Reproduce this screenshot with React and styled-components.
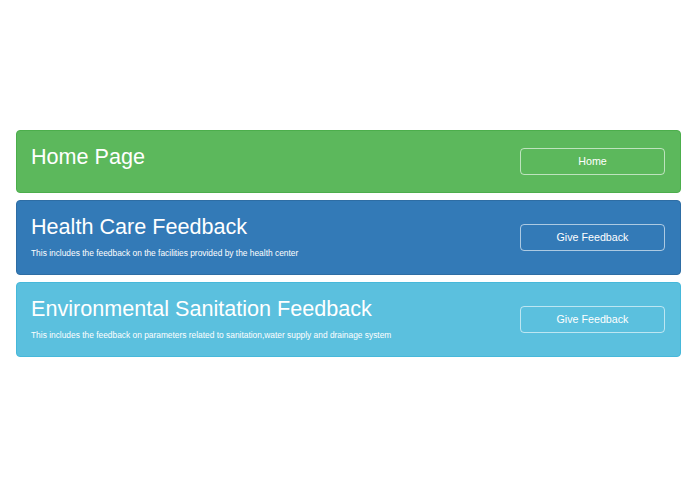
import React from 'react';
import styled, { createGlobalStyle } from 'styled-components';

const GlobalStyle = createGlobalStyle`
    body {
        margin: 0;
        background: #ffffff;
        font-family: "Liberation Sans", Arial, sans-serif;
    }
`;

const tones = {
    success: { bg: '#5cb85c', border: '#4cae4c' },
    primary: { bg: '#337ab7', border: '#2e6da4' },
    info: { bg: '#5bc0de', border: '#46b8da' },
};

const Page = styled.main`
    display: flex;
    flex-direction: column;
    gap: 7px;
    width: 665px;
    padding: 130px 0 0 16px;
`;

const Panel = styled.section`
    display: flex;
    align-items: center;
    justify-content: space-between;
    padding: 14px 15px 15px 14px;
    background: ${p => tones[p.$tone].bg};
    border: 1px solid ${p => tones[p.$tone].border};
    border-radius: 4px;
    color: #ffffff;
`;

const Body = styled.div`
    display: flex;
    flex-direction: column;
`;

const Title = styled.h2`
    margin: 0 0 8px;
    font-size: 21.6px;
    line-height: 24px;
    font-weight: 400;
`;

const Desc = styled.p`
    margin: 0;
    font-size: 8.4px;
    line-height: 12px;
`;

const OutlineButton = styled.a`
    display: flex;
    align-items: center;
    justify-content: center;
    box-sizing: border-box;
    width: 145px;
    height: 27px;
    border: 1px solid rgba(255, 255, 255, 0.6);
    border-radius: 4px;
    color: #ffffff;
    font-size: 10.7px;
    text-decoration: none;
    cursor: pointer;
`;

const sections = [
    { tone: 'success', title: 'Home Page', action: 'Home' },
    {
        tone: 'primary',
        title: 'Health Care Feedback',
        desc: 'This includes the feedback on the facilities provided by the health center',
        action: 'Give Feedback',
    },
    {
        tone: 'info',
        title: 'Environmental Sanitation Feedback',
        desc: 'This includes the feedback on parameters related to sanitation,water supply and drainage system',
        action: 'Give Feedback',
    },
];

const App = () => {
    return (
        <>
            <GlobalStyle />
            <Page>
                {sections.map(s => (
                    <Panel key={s.title} $tone={s.tone}>
                        <Body>
                            <Title>{s.title}</Title>
                            {s.desc && <Desc>{s.desc}</Desc>}
                        </Body>
                        <OutlineButton>{s.action}</OutlineButton>
                    </Panel>
                ))}
            </Page>
        </>
    );
};

export default App;
